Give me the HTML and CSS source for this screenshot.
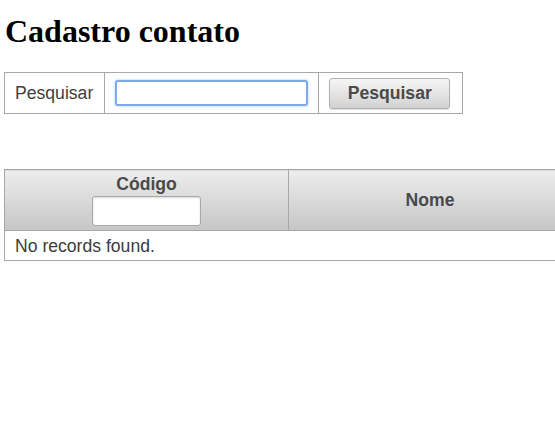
FILE: index.html
```html
<!DOCTYPE html>
<html>
<head>
<meta charset="utf-8">
<title>Cadastro contato</title>
<link rel="stylesheet" href="styles.css">
</head>
<body>
<h1 class="title">Cadastro contato</h1>
<table class="panel-grid">
  <tr>
    <td class="pg-label">Pesquisar</td>
    <td class="pg-input"><input type="text" class="text-input focused"></td>
    <td class="pg-btn"><button class="btn">Pesquisar</button></td>
  </tr>
</table>
<table class="data-table">
  <thead>
    <tr>
      <th class="col-code">Código<input type="text" class="filter"></th>
      <th class="col-name">Nome</th>
    </tr>
  </thead>
  <tbody>
    <tr><td colspan="2" class="empty">No records found.</td></tr>
  </tbody>
</table>
</body>
</html>
```

FILE: styles.css
```css
html, body { overflow: hidden; }
body {
  margin: 0 0 0 4px;
  background: #fff;
  font-family: "Liberation Sans", Arial, sans-serif;
  color: #404040;
}
.title {
  font-family: "Liberation Serif", "Times New Roman", serif;
  font-size: 32px;
  font-weight: bold;
  color: #000;
  margin: 13px 0 22px 1px;
}
.panel-grid {
  border-collapse: collapse;
  font-size: 17.6px;
}
.panel-grid td {
  border: 1px solid #a8a8a8;
  height: 40px;
  padding: 0 10px;
  vertical-align: middle;
}
.panel-grid .pg-label { padding: 0 11px 0 10px; }
.panel-grid .pg-btn { padding: 0 12px 0 10px; }
.text-input {
  display: block;
  box-sizing: border-box;
  width: 193px;
  height: 26px;
  margin: 0;
  border: 2px solid #7bace8;
  border-radius: 3px;
  box-shadow: 0 0 3px #a8c9f1;
  outline: none;
  padding: 2px 4px;
}
.btn {
  display: block;
  width: 121px;
  height: 31px;
  box-sizing: border-box;
  border: 1px solid #b0b0b0;
  border-radius: 3px;
  background: linear-gradient(#f6f6f6, #d2d2d2);
  font-family: "Liberation Sans", Arial, sans-serif;
  font-size: 17.6px;
  font-weight: bold;
  color: #4a4a4a;
  padding: 0;
  box-shadow: 0 1px 1px rgba(0,0,0,0.12);
}
.data-table {
  margin-top: 55px;
  width: 568px;
  border-collapse: collapse;
  font-size: 17.6px;
}
.data-table th {
  border: 1px solid #a8a8a8;
  background: linear-gradient(#ededed, #c6c6c6);
  font-weight: bold;
  color: #4a4a4a;
  padding: 4px 10px 4px;
  text-align: center;
  vertical-align: middle;
  line-height: 20px;
}
.col-code { width: 263px; }
.filter {
  display: block;
  box-sizing: border-box;
  width: 109px;
  height: 30px;
  margin: 2px auto 0;
  border: 1px solid #a8a8a8;
  border-radius: 3px;
  background: #fff;
  box-shadow: inset 0 1px 2px rgba(0,0,0,0.15);
  padding: 0;
}
.data-table td {
  border: 1px solid #a8a8a8;
  padding: 5px 10px 4px;
  line-height: 20px;
  height: 20px;
  color: #3c3c3c;
}
```
